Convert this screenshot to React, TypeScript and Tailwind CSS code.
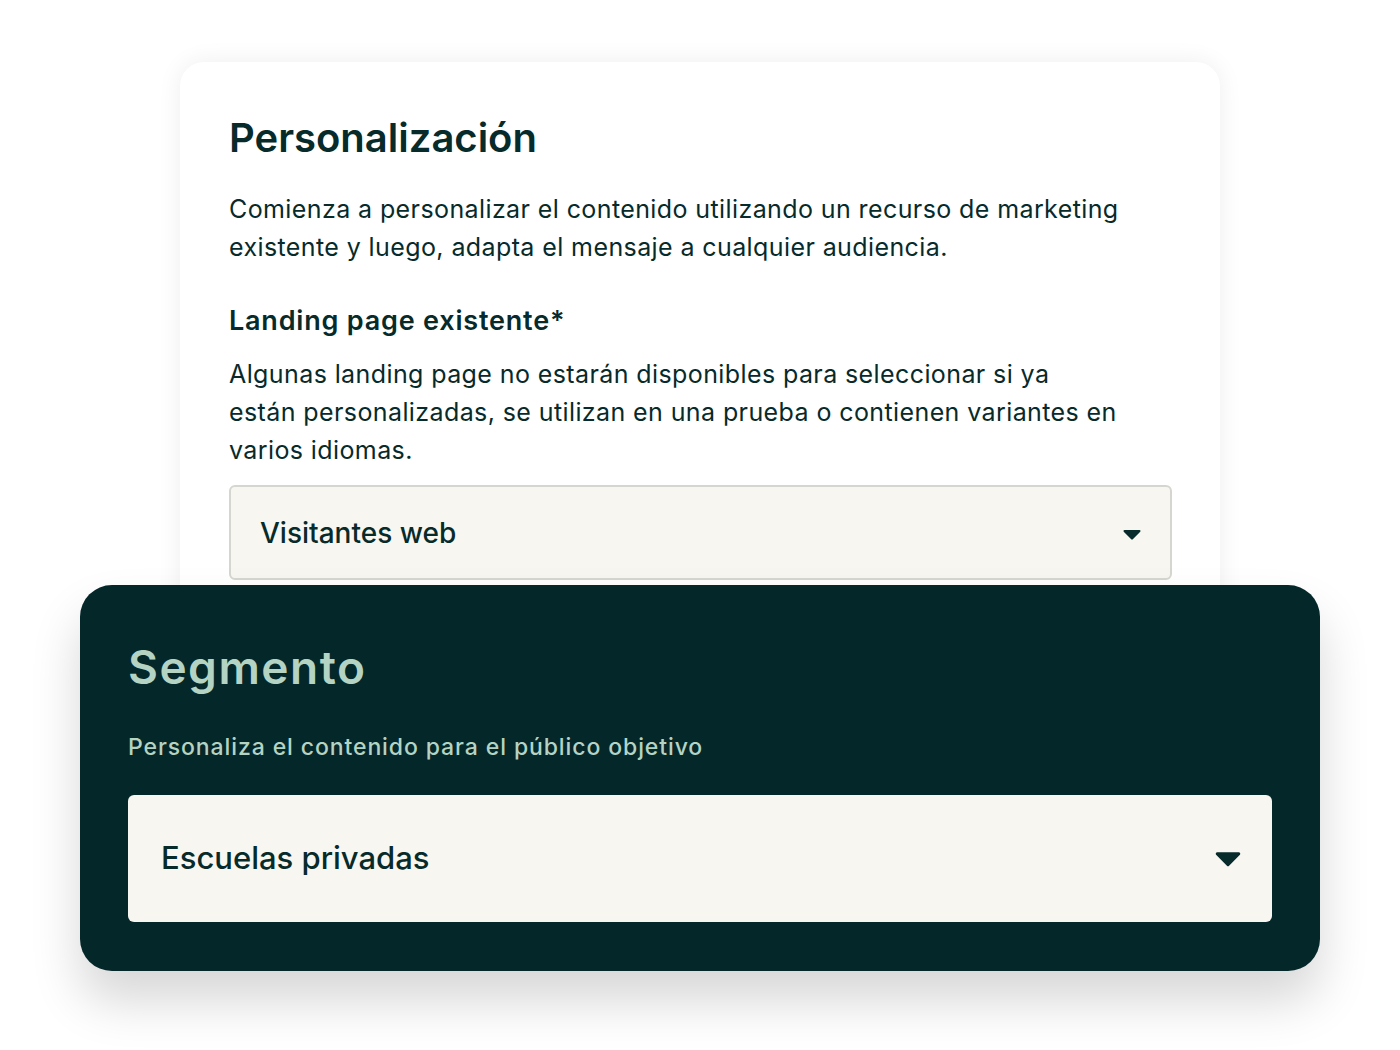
import React from "react";

function Caret({ w, h }: { w: number; h: number }) {
  return (
    <svg width={w} height={h} viewBox="0 0 18 10" fill="#072a2b">
      <path d="M1.5 0h15a1 1 0 0 1 .75 1.66L9.75 9.3a1 1 0 0 1-1.5 0L.75 1.66A1 1 0 0 1 1.5 0z" />
    </svg>
  );
}

export default function App() {
  const font = { fontFamily: "Inter, 'Noto Sans', sans-serif" };
  return (
    <div className="w-[1400px] h-[1050px] bg-white overflow-hidden" style={font}>
      <div className="pt-[62px]">
        <div className="mx-[180px] bg-white rounded-[24px] shadow-[0_0_24px_rgba(0,0,0,0.07)] pt-[52px] px-[49px] pb-[100px] text-[#072a2b]">
          <h1 className="text-[40px] leading-[48px] font-semibold">Personalización</h1>
          <p className="mt-[28px] text-[25px] leading-[38px] tracking-[0.4px]">
            Comienza a personalizar el contenido utilizando un recurso de marketing
            <br />
            existente y luego, adapta el mensaje a cualquier audiencia.
          </p>
          <h2 className="mt-[36px] text-[27px] leading-[38px] font-semibold tracking-[0.8px]">Landing page existente*</h2>
          <p className="mt-[15px] text-[25px] leading-[38px] tracking-[0.4px]">
            Algunas landing page no estarán disponibles para seleccionar si ya
            <br />
            están personalizadas, se utilizan en una prueba o contienen variantes en
            <br />
            varios idiomas.
          </p>
          <div className="mt-[16px] h-[95px] w-[943px] bg-[#f8f6f0] border-2 border-[#d6d6d0] rounded-[6px] flex items-center justify-between pl-[29px] pr-[29px]">
            <span className="text-[28px] font-medium">Visitantes web</span>
            <div className="mt-[5px]">
              <Caret w={18} h={10} />
            </div>
          </div>
        </div>
        <div className="relative z-10 -mt-[95px] mx-[80px] h-[386px] bg-[#04272a] rounded-[32px] shadow-[0_30px_50px_rgba(0,0,0,0.16)] px-[48px] pt-[54px]">
          <h2 className="text-[46px] leading-[56px] font-semibold text-[#b4d3c2] tracking-[1.5px]">Segmento</h2>
          <p className="mt-[37px] text-[23px] leading-[30px] font-medium text-[#b4d3c2] tracking-[0.9px]">
            Personaliza el contenido para el público objetivo
          </p>
          <div className="mt-[33px] h-[127px] bg-[#f8f6f0] rounded-[6px] flex items-center justify-between pl-[33px] pr-[31px]">
            <span className="text-[31px] font-medium text-[#072a2b]">Escuelas privadas</span>
            <div className="mt-[2px]">
              <Caret w={26} h={15} />
            </div>
          </div>
        </div>
      </div>
    </div>
  );
}
